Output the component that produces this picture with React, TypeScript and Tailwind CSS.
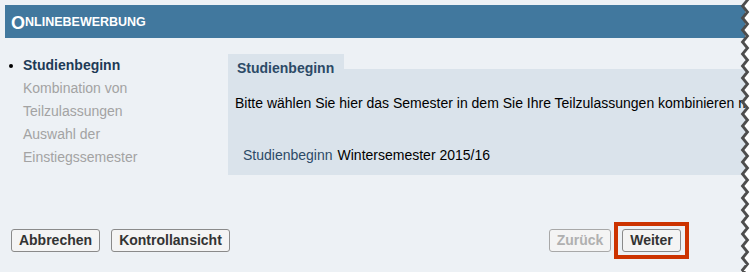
import React from "react";

function Zigzag() {
  const h = 272;
  const period = 12;
  const pts: string[] = [];
  for (let y = -6, i = 0; y <= h + period; y += period / 2, i++) {
    pts.push(`${i % 2 === 0 ? 2.5 : 7.5},${y}`);
  }
  const line = pts.join(" ");
  const fillPts = `${line} 12,${h + period} 12,-6`;
  return (
    <svg
      className="absolute right-0 top-0"
      width="10"
      height={h}
      viewBox={`0 0 10 ${h}`}
    >
      <polygon points={fillPts} fill="#ffffff" />
      <polyline points={line} fill="none" stroke="#4d4d4d" strokeWidth="2.8" strokeLinejoin="miter" />
    </svg>
  );
}

function Btn({ children, w, disabled }: { children: React.ReactNode; w: string; disabled?: boolean }) {
  return (
    <div
      className={
        "h-[23px] flex items-center justify-center rounded-[3px] border bg-[#f4f4f4] text-[14px] font-bold " +
        w +
        (disabled ? " border-[#a8a8a8] text-[#b0b0b0]" : " border-[#8a8a8a] text-[#333333]")
      }
    >
      {children}
    </div>
  );
}

export default function App() {
  return (
    <div
      className="relative w-[750px] h-[272px] overflow-hidden bg-[#edf1f5] pt-[5px] pl-[5px] pr-[5px]"
      style={{ fontFamily: '"Liberation Sans", Arial, Helvetica, sans-serif' }}
    >
      <div className="h-[33px] bg-[#41789e] flex items-center pl-[6px] pt-[2px] text-white font-bold leading-none">
        <span className="text-[18px]">O</span>
        <span className="text-[12.5px]">NLINEBEWERBUNG</span>
      </div>

      <div className="flex mt-[16px]">
        <div className="w-[223px] shrink-0 text-[14px] leading-[23px]">
          <div className="flex">
            <div className="w-[18px] flex items-center pl-[4px]">
              <span className="block w-[4px] h-[4px] rounded-full bg-black" />
            </div>
            <div className="font-bold text-[#1e3a56]">Studienbeginn</div>
          </div>
          <div className="pl-[18px] w-[168px] text-[#a3a3a3]">Kombination von Teilzulassungen</div>
          <div className="pl-[18px] w-[168px] text-[#a3a3a3]">Auswahl der Einstiegssemester</div>
        </div>

        <div className="flex-1 flex flex-col">
          <div className="relative z-10 w-[116px] h-[15px] bg-[#dae3eb] pl-[9px] pt-[6px] text-[14px] leading-[16px] font-bold text-[#2c4a67] whitespace-nowrap">
            Studienbeginn
          </div>
          <div className="h-[106px] bg-[#dae3eb] pl-[7px] pt-[24px] text-[14px] leading-[20px] whitespace-nowrap">
            <div className="text-black">
              Bitte wählen Sie hier das Semester in dem Sie Ihre Teilzulassungen kombinieren möchten.
            </div>
            <div className="flex gap-[5px] ml-[8px] mt-[32px]">
              <span className="text-[#2c4a67]">Studienbeginn</span>
              <span className="text-black">Wintersemester 2015/16</span>
            </div>
          </div>
        </div>
      </div>

      <div className="flex items-center mt-[47px]">
        <div className="flex gap-[11px] pl-[6px]">
          <Btn w="w-[89px]">Abbrechen</Btn>
          <Btn w="w-[119px]">Kontrollansicht</Btn>
        </div>
        <div className="flex items-center gap-[3px] ml-auto mr-[56px]">
          <Btn w="w-[62px]" disabled>
            Zurück
          </Btn>
          <div className="border-4 border-[#cc3300] px-[4px] py-[3px]">
            <Btn w="w-[59px]">Weiter</Btn>
          </div>
        </div>
      </div>

      <Zigzag />
    </div>
  );
}
